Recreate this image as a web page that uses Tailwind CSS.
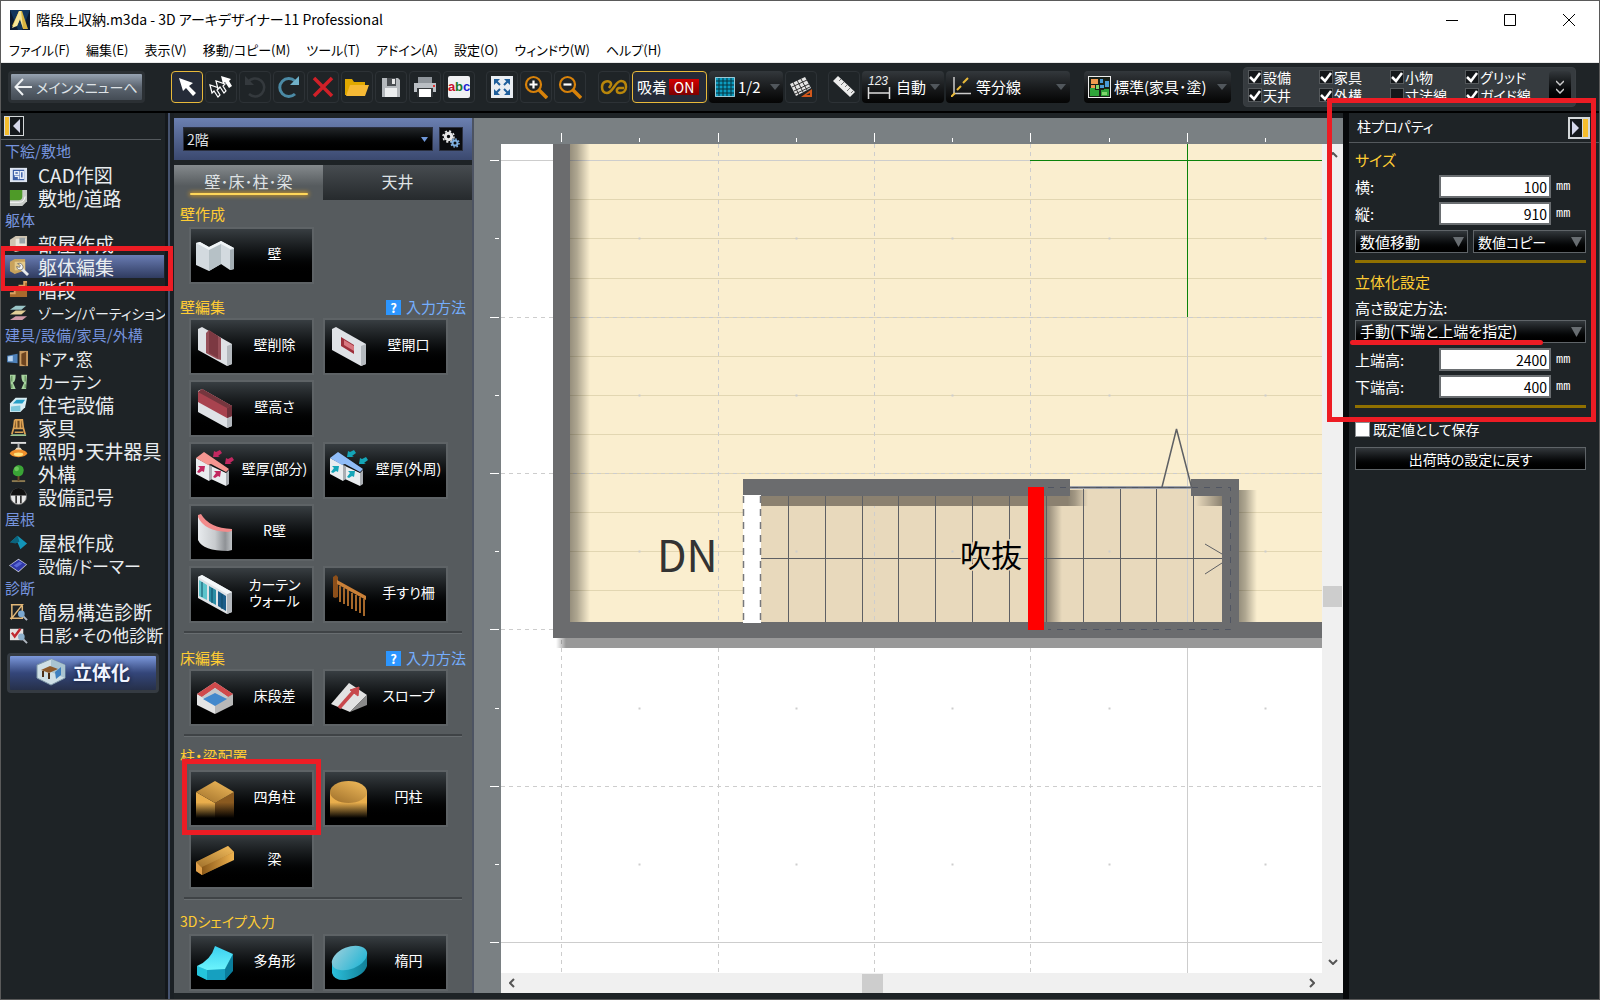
<!DOCTYPE html>
<html lang="ja">
<head>
  <meta charset="UTF-8" />
  <meta name="viewport" content="width=device-width, initial-scale=1.0" />
  <title>階段上収納.m3da - 3D アーキデザイナー11 Professional</title>
  <script src="https://cdn.jsdelivr.net/npm/@tailwindcss/browser@4"></script>
</head>
<body class="relative flex h-screen flex-col overflow-hidden border border-[#5a5a5a] bg-[#1e2326] font-['Noto_Sans_CJK_JP',sans-serif] text-[15px] text-white [font-feature-settings:'palt']">

  <!-- Title bar -->
  <header class="flex h-[37px] shrink-0 items-center bg-white pl-[9px] text-black">
    <svg class="h-5 w-5" viewBox="0 0 20 20">
      <rect width="20" height="20" fill="#0b1a30" />
      <path d="M0 0h20L12 20H8z" fill="#12365c" />
      <path d="M9 1h3l6 18h-5L10 9 7 16H2z" fill="#d9b440" />
      <path d="M9 1 2 18l5-2 3-7 3 9-2-17z" fill="#f6e69a" />
    </svg>
    <h1 class="ml-[6px] grow text-[14px]">階段上収納.m3da - 3D アーキデザイナー11 Professional</h1>
    <button class="grid h-full w-[58px] place-items-center" aria-label="最小化"><svg class="h-3 w-3" viewBox="0 0 12 12"><path d="M0 6.500h12" stroke="#000" /></svg></button>
    <button class="grid h-full w-[58px] place-items-center" aria-label="最大化"><svg class="h-3 w-3" viewBox="0 0 12 12" fill="none"><path d="M.5.500h11v11H.5z" stroke="#000" /></svg></button>
    <button class="grid h-full w-[60px] place-items-center" aria-label="閉じる"><svg class="h-3 w-3" viewBox="0 0 12 12"><path d="m0 0 12 12M12 0 0 12" stroke="#000" /></svg></button>
  </header>

  <nav class="flex h-[25px] shrink-0 items-center gap-4 border-b border-[#e8e8e8] bg-white pl-[8px] text-[13px] text-black">
    <button>ファイル(F)</button>
    <button>編集(E)</button>
    <button>表示(V)</button>
    <button>移動/コピー(M)</button>
    <button>ツール(T)</button>
    <button>アドイン(A)</button>
    <button>設定(O)</button>
    <button>ウィンドウ(W)</button>
    <button>ヘルプ(H)</button>
  </nav>

  <!-- Toolbar -->
  <div class="flex h-[50px] shrink-0 items-start border-b-2 border-black bg-[#1f2427] pt-2 pl-[7px]">
    <button class="flex h-8 w-[137px] items-center gap-1 rounded border-3 border-[#2b3034] bg-linear-to-b from-[#97a3b2] via-[#5c6570] to-[#444c55] pl-[3px] text-[14px] whitespace-nowrap text-[#dde2e6]">
      <svg class="h-5 w-[18px] shrink-0" viewBox="0 0 18 20" fill="none" stroke="#eef1f3" stroke-width="2"><path d="M18 10H2M9 2 1.500 10 9 18" /></svg>メインメニューへ
    </button>

    <div id="tools-edit" class="ml-[26px] flex gap-[2px]"></div>
    <div id="tools-zoom" class="ml-[11px] flex gap-[2px]"></div>

    <div class="ml-3 flex gap-[2px]">
      <button class="grid h-8 w-8 place-items-center rounded-sm border border-[#2d3236]" aria-label="連続">
        <svg class="h-4 w-7" viewBox="0 0 28 16" fill="none" stroke="#b8860b" stroke-width="2.500"><path d="M9 9c2-3 3-4 1-6C7 1 2 3 2 8c0 4 2 6 5 6 6 0 8-12 14-12 4 0 5 3 5 6 0 4-3 6-6 6-4 0-4-4-1-5h5" /></svg>
      </button>
      <button class="flex h-8 w-[75px] items-center gap-[2px] rounded-sm border border-[#e8b93a] bg-[#252b38] pl-1 text-[15px]">吸着<span class="h-4 w-[30px] bg-linear-to-b from-[#d40000] to-[#7d0000] text-center text-[14px] leading-4">ON</span></button>
      <div class="grid h-8 w-[74px] items-center rounded-sm bg-linear-to-b from-[#33383c] to-[#050505]">
        <svg class="col-start-1 row-start-1 ml-[6px] h-5 w-5" viewBox="0 0 20 20"><path d="M0 0h20v20H0z" fill="#0b9cc0" /><path d="M4 0v20M8 0v20M12 0v20M16 0v20M0 4h20M0 8h20M0 12h20M0 16h20" stroke="#06323f" /><path d="M.5.500h19v19H.5z" fill="none" stroke="#9cc8d4" /></svg>
        <select aria-label="グリッド分割" class="col-start-1 row-start-1 h-8 w-full appearance-none pl-[29px] text-[15px]"><option>1/2</option></select>
        <svg class="pointer-events-none col-start-1 row-start-1 mr-[3px] h-[6px] w-[10px] justify-self-end" viewBox="0 0 10 6"><path d="M0 0h10L5 6z" fill="#51575c" /></svg>
      </div>
      <button class="grid h-8 w-8 place-items-center rounded-sm border border-[#2d3236]" aria-label="グリッド角度">
        <svg class="h-6 w-6" viewBox="0 0 24 24"><path d="M1 9 16 2l6 11-15 8z" fill="#e4e4e4" /><path d="m4 7 6 13M8 5l6 12M12 4l6 11M3 12l15-7M5 16l15-7M6 19l15-7" stroke="#333" /><path d="M23 14v8H12z" fill="#d2581c" /><path d="M21 18v2h-4z" fill="#1f2427" /></svg>
      </button>
    </div>

    <div class="ml-[11px] flex gap-[2px]">
      <button class="grid h-8 w-8 place-items-center rounded-sm border border-[#2d3236]" aria-label="計測">
        <svg class="h-6 w-6" viewBox="0 0 24 24"><path d="M1 6 6 1l17 16-5 5z" fill="#ececec" /><path d="m9 4-2 2m5 1-3 3m6 0-2 2m5 1-3 3m6 0-2 2" stroke="#777" /></svg>
      </button>
      <div class="grid h-8 w-[82px] items-center rounded-sm bg-linear-to-b from-[#33383c] to-[#050505]">
        <svg class="col-start-1 row-start-1 ml-[5px] h-7 w-6" viewBox="0 0 24 28"><text x="1" y="12" font-size="12" font-style="italic" font-family="Liberation Sans" fill="#eee">123</text><path d="M1.500 14v12M22.500 14v12M1 20h22" stroke="#ddd" stroke-width="1.500" /></svg>
        <select aria-label="寸法線" class="col-start-1 row-start-1 h-8 w-full appearance-none pl-[34px] text-[15px]"><option>自動</option></select>
        <svg class="pointer-events-none col-start-1 row-start-1 mr-1 h-[6px] w-[10px] justify-self-end" viewBox="0 0 10 6"><path d="M0 0h10L5 6z" fill="#51575c" /></svg>
      </div>
      <div class="grid h-8 w-[124px] items-center rounded-sm bg-linear-to-b from-[#33383c] to-[#050505]">
        <svg class="col-start-1 row-start-1 ml-[5px] h-5 w-5" viewBox="0 0 20 20" fill="none"><path d="M3 0v16.500h17" stroke="#ccc" stroke-width="1.500" /><path d="m0 20 4-4m2-3 4-4m2-3 5-5" stroke="#e8b93a" stroke-width="2" /></svg>
        <select aria-label="補助線" class="col-start-1 row-start-1 h-8 w-full appearance-none pl-[30px] text-[15px]"><option>等分線</option></select>
        <svg class="pointer-events-none col-start-1 row-start-1 mr-1 h-[6px] w-[10px] justify-self-end" viewBox="0 0 10 6"><path d="M0 0h10L5 6z" fill="#51575c" /></svg>
      </div>
    </div>

    <div class="ml-[14px] grid h-8 w-[147px] items-center rounded-sm bg-linear-to-b from-[#33383c] to-[#050505]">
      <svg class="col-start-1 row-start-1 ml-1 h-[22px] w-[23px]" viewBox="0 0 23 22"><path d="M0 0h23v22H0z" fill="#eee" /><path d="M1 1h21v20H1z" fill="#182018" /><path d="M3 3h7v5H3zM3 9h4v3H3z" fill="#f09a50" /><path d="M12 3h3v4h-3zM17 5h4v6h-4zM12 9h4v3h-4z" fill="#4a9ad8" /><path d="M2 12h5v2h4v6H2zM13 14h3v-1h5v7h-8z" fill="#2fa53a" /><path d="M8 9h3v4H8zM14 16h5v3h-5z" fill="#7fd66b" /></svg>
      <select aria-label="表示設定" class="col-start-1 row-start-1 h-8 w-full appearance-none pl-[30px] text-[15px]"><option>標準(家具･塗)</option></select>
      <svg class="pointer-events-none col-start-1 row-start-1 mr-1 h-[6px] w-[10px] justify-self-end" viewBox="0 0 10 6"><path d="M0 0h10L5 6z" fill="#51575c" /></svg>
    </div>

    <div class="-mt-1 ml-3 flex h-10 w-[333px] items-start justify-between rounded border border-[#3a3f43] bg-[#363b3f] pr-1 pl-1">
      <div id="layers" class="grid grid-cols-[71px_71px_75px_75px] text-[14px] leading-[18px]"></div>
      <button class="mt-[3px] grid h-8 w-[22px] place-items-center rounded-sm bg-linear-to-b from-[#33383c] to-black" aria-label="展開">
        <svg class="h-[14px] w-2" viewBox="0 0 8 14" fill="none" stroke="#ccc" stroke-width="1.500"><path d="m0 1 4 4 4-4M0 9l4 4 4-4" /></svg>
      </button>
    </div>
  </div>

  <main class="flex min-h-0 grow">

    <!-- Left menu -->
    <aside class="flex w-[173px] shrink-0 border-r-4 border-[#1b2024]">
      <div class="w-[164px] shrink-0">
        <div class="mr-1 h-[27px] border-b border-[#54595d] pt-[3px] pl-[3px]">
          <button class="block" aria-label="メニューを隠す"><svg class="h-5 w-5" viewBox="0 0 20 20"><path d="M0 0h20v20H0z" fill="#d4d8da" /><path d="M6 1h13v18H6z" fill="#15191c" /><path d="M1 1h4v18H1z" fill="#f5bd2c" /><path d="M16 3v14l-7-7z" fill="#d5d8ea" /></svg></button>
        </div>
        <ul id="menu"></ul>
        <button class="mt-[7px] ml-[6px] flex h-10 w-[152px] items-center justify-center gap-[7px] rounded border-3 border-[#353b42] bg-linear-to-b from-[#7d99dc] via-[#34467a] to-[#26304a] pb-[2px] text-[19px] font-bold text-[#f0f4ff] [text-shadow:0_0_4px_#0a1430]">
          <svg class="h-7 w-[30px]" viewBox="0 0 30 28"><path d="M15 1 29 7v13l-14 7L1 20V7z" fill="#cfe0e6" stroke="#7f98a8" /><path d="M15 1 29 7v13L15 14z" fill="#a9c4d0" /><path d="m5 12 9-4 8 3-9 4z" fill="#8d5a2a" /><path d="M7 13v6m6-4v6m8-8v5" stroke="#4d3018" stroke-width="2" /><path d="m19 14 6-5v8l-5 4z" fill="#3d80c0" /></svg>立体化
        </button>
      </div>
      <div class="w-[5px] border-x-2 border-l-[#14181c] border-r-[#46536f] bg-[#14181c]"></div>
    </aside>

    <!-- Tool palette -->
    <section class="mt-[5px] mb-[6px] w-[300px] shrink-0 overflow-hidden border-r-2 border-[#4c5362] bg-[#565b5e]">
      <div class="flex h-[42px] items-center gap-[6px] bg-linear-to-b from-[#6b80b1] to-[#3b496f] pl-[9px]">
        <div class="grid w-[250px] items-center border border-[#2b3040] bg-linear-to-b from-[#222629] to-black">
          <select aria-label="階" class="col-start-1 row-start-1 h-[22px] appearance-none pl-[3px] text-[14px] leading-5 text-[#e0e4e8]"><option>2階</option></select>
          <svg class="pointer-events-none col-start-1 row-start-1 mr-1 h-[5px] w-[7px] justify-self-end" viewBox="0 0 7 5"><path d="M0 0h7L3.500 5z" fill="#6f97d8" /></svg>
        </div>
        <button class="grid h-6 w-6 place-items-center border border-[#2b3040] bg-[#0b0c0e]" aria-label="階の設定">
          <svg class="h-[18px] w-[18px]" viewBox="0 0 18 18" fill="none"><circle cx="6.500" cy="6.500" r="3.200" stroke="#e8e8e8" stroke-width="3" /><circle cx="6.500" cy="6.500" r="5.500" stroke="#e8e8e8" stroke-width="1.500" stroke-dasharray="2.200 2.100" /><circle cx="13" cy="13" r="2.500" stroke="#7fb0e0" stroke-width="2" /><circle cx="13" cy="13" r="4" stroke="#7fb0e0" stroke-width="1.500" stroke-dasharray="1.600 1.500" /></svg>
        </button>
      </div>
      <div class="grid h-10 grid-cols-2 border-t-5 border-[#1e2326] text-[16px] text-[#dfe2e4]">
        <button class="flex flex-col items-center bg-linear-to-b from-[#858a8d] to-[#565b5e] to-60% pt-[4px]">
          <span class="leading-6">壁･床･柱･梁</span>
          <span class="h-[2px] w-[118px] rounded bg-[#ffd75a] shadow-[0_0_4px_1px_#c8932a]"></span>
        </button>
        <button class="bg-linear-to-b from-[#474c50] to-[#262a2d] pb-1">天井</button>
      </div>
      <div id="palette"></div>
    </section>

    <!-- Drawing area -->
    <section class="mt-[5px] mb-[6px] grid min-w-0 grow grid-cols-[27px_minmax(0,1fr)_21px] grid-rows-[26px_minmax(0,1fr)_20px] bg-[#7a8083]">
      <svg id="ruler-x" class="col-span-2 col-start-2 h-full w-full" stroke="#fff"></svg>
      <svg id="ruler-y" class="col-start-1 row-start-2 h-full w-full" stroke="#fff"></svg>
      <svg id="plan" class="col-start-2 row-start-2 h-full w-full bg-white">
        <defs>
          <linearGradient id="shade"><stop offset="0" stop-opacity=".4" /><stop offset=".35" stop-opacity=".3" /><stop offset="1" stop-opacity="0" /></linearGradient>
          <linearGradient id="shadeIn"><stop offset="0" stop-opacity="0" /><stop offset="1" stop-opacity=".4" /></linearGradient>
        </defs>
        <g transform="translate(-501 -144)">
          <path d="M570 144h752v478H570z" fill="#faeecf" />
          <path d="M743 488h496v134H743z" fill="#e8d9bc" />
          <g id="boards" stroke="#e2d6b2" stroke-width="1"></g>
          <g id="grid" stroke="#cdcdcd"></g>
          <!-- shadows -->
          <path d="M570 144h20v478h-20z" fill="url(#shade)" />
          <path d="M566 638h756v10H566z" fill="#999" />
          <path d="M556 638h10v10h-10z" fill="url(#shadeIn)" />
          <path d="M760 496h308v10H760z" fill="#8b8170" />
          <path d="M1068 490h20v16h-20z" fill="url(#shade)" />
          <path d="M1044 506h18v116h-18z" fill="url(#shade)" />
          <path d="M1239 490h18v132h-18z" fill="url(#shade)" />
          <path d="M1196 496h26v10h-26z" fill="url(#shadeIn)" />
          <!-- stairs -->
          <g id="treads" stroke="#5e6064"></g>
          <path d="M761 558.500h461M1205 544l17 10M1205 574l17-11" stroke="#5e6064" fill="none" />
          <!-- walls -->
          <path d="M553 144h17v478h652V496h-31v-17h48v143h83v16H553zM743 479h327v17H743z" fill="#6b6c6e" />
          <path d="M743 495h18v128h-18z" fill="#fff" />
          <path d="M743.500 496v127M760.500 496v127" stroke="#77787c" stroke-width="1.500" stroke-dasharray="7 6" />
          <path d="M1070 487.500h121" stroke="#b9bcc6" stroke-width="3" />
          <path d="M1070 487.500h121M1162 487l14.500-58 15 58" stroke="#5e6064" stroke-width="1.500" fill="none" />
          <path d="M1048 487.500h182.500v142H1048" stroke="#505562" stroke-dasharray="6 6" fill="none" />
          <path d="M1030 160.500h292M1187.500 144v173" stroke="#0a820a" />
          <path d="M1028 487h16v143h-16z" fill="#f00" />
          <text x="657" y="572" font-size="43" fill="#333">DN</text>
          <text x="960" y="567" font-size="31" fill="#000" stroke="#e8d9bc" stroke-width="3" paint-order="stroke">吹抜</text>
        </g>
      </svg>
      <div class="row-start-2 flex flex-col items-center justify-between bg-[#f0f0f0] py-2">
        <svg class="h-[6px] w-[10px]" viewBox="0 0 10 6" fill="none" stroke="#555" stroke-width="2"><path d="m1 5 4-4 4 4" /></svg>
        <div class="mt-[76px] h-[21px] w-[19px] bg-[#cdcdcd]"></div>
        <svg class="h-[6px] w-[10px]" viewBox="0 0 10 6" fill="none" stroke="#555" stroke-width="2"><path d="m1 1 4 4 4-4" /></svg>
      </div>
      <div class="col-span-2 col-start-2 flex items-center bg-[#f0f0f0] pr-7 pl-2">
        <svg class="h-[10px] w-[6px]" viewBox="0 0 6 10" fill="none" stroke="#555" stroke-width="2"><path d="M5 1 1 5l4 4" /></svg>
        <div class="h-[19px] grow basis-0 pl-[43%]"><div class="h-full w-[21px] bg-[#cdcdcd]"></div></div>
        <svg class="h-[10px] w-[6px]" viewBox="0 0 6 10" fill="none" stroke="#555" stroke-width="2"><path d="m1 1 4 4-4 4" /></svg>
      </div>
    </section>

    <!-- Column properties -->
    <aside class="w-[256px] shrink-0 border-l-6 border-[#07090b]">
      <div class="flex h-[30px] items-center justify-between border-b border-[#54595d] pr-[9px] pl-2 text-[14px]">
        <h2 class="pb-[2px]">柱プロパティ</h2>
        <button aria-label="プロパティを隠す"><svg class="h-[22px] w-[22px]" viewBox="0 0 22 22"><path d="M0 0h22v22H0z" fill="#d4d8da" /><path d="M2 2h12v18H2z" fill="#15191c" /><path d="M15 2h5v18h-5z" fill="#f5bd2c" /><path d="M4 4v14l7-7z" fill="#d5d8ea" /></svg></button>
      </div>
      <form class="pr-[13px] pl-[6px] leading-[22px]">
        <h3 class="mt-[6px] text-[#ffcc33]">サイズ</h3>
        <div class="mt-[4px] grid grid-cols-[84px_112px_1fr] items-center gap-y-[4px]">
          <label for="width">横:</label>
          <input id="width" value="100" class="h-[23px] w-full border-2 border-[#6a6e71] bg-white pr-[2px] text-right text-[14px] text-black" />
          <span class="pl-[5px] font-['Liberation_Mono',monospace] text-[12px]">mm</span>
          <label for="depth">縦:</label>
          <input id="depth" value="910" class="h-[23px] w-full border-2 border-[#6a6e71] bg-white pr-[2px] text-right text-[14px] text-black" />
          <span class="pl-[5px] font-['Liberation_Mono',monospace] text-[12px]">mm</span>
        </div>
        <div class="mt-[5px] grid grid-cols-2 gap-[5px]">
          <div class="grid items-center border border-[#5f6468] bg-linear-to-b from-[#33383c] to-black">
            <select aria-label="数値移動" class="col-start-1 row-start-1 h-[21px] w-full appearance-none pl-1 leading-5"><option>数値移動</option></select>
            <svg class="pointer-events-none col-start-1 row-start-1 mr-[3px] h-[10px] w-[11px] justify-self-end" viewBox="0 0 11 10"><path d="M0 0h11L5.500 10z" fill="#686d71" /></svg>
          </div>
          <div class="grid items-center border border-[#5f6468] bg-linear-to-b from-[#33383c] to-black">
            <select aria-label="数値コピー" class="col-start-1 row-start-1 h-[21px] w-full appearance-none pl-1 text-[14px] leading-5"><option>数値コピー</option></select>
            <svg class="pointer-events-none col-start-1 row-start-1 mr-[3px] h-[10px] w-[11px] justify-self-end" viewBox="0 0 11 10"><path d="M0 0h11L5.500 10z" fill="#686d71" /></svg>
          </div>
        </div>
        <hr class="mt-[7px] border-t-3 border-[#907000]" />
        <h3 class="mt-2 text-[#ffcc33]">立体化設定</h3>
        <label for="method" class="mt-1 mb-[1px] block">高さ設定方法:</label>
        <div class="grid items-center border border-[#5f6468] bg-linear-to-b from-[#33383c] to-black">
          <select id="method" class="col-start-1 row-start-1 h-[21px] w-full appearance-none pb-[2px] pl-1 leading-[19px]"><option>手動(下端と上端を指定)</option></select>
          <svg class="pointer-events-none col-start-1 row-start-1 mr-[3px] h-[10px] w-[11px] justify-self-end" viewBox="0 0 11 10"><path d="M0 0h11L5.500 10z" fill="#686d71" /></svg>
        </div>
        <div class="mt-[5px] grid grid-cols-[84px_112px_1fr] items-center gap-y-[4px]">
          <label for="top">上端高:</label>
          <input id="top" value="2400" class="h-[23px] w-full border-2 border-[#6a6e71] bg-white pr-[2px] text-right text-[14px] text-black" />
          <span class="pl-[5px] font-['Liberation_Mono',monospace] text-[12px]">mm</span>
          <label for="bottom">下端高:</label>
          <input id="bottom" value="400" class="h-[23px] w-full border-2 border-[#6a6e71] bg-white pr-[2px] text-right text-[14px] text-black" />
          <span class="pl-[5px] font-['Liberation_Mono',monospace] text-[12px]">mm</span>
        </div>
        <hr class="mt-[7px] border-t-3 border-[#907000]" />
        <label class="mt-[10px] flex items-center gap-[3px] text-[14px]"><input type="checkbox" class="h-[15px] w-[15px] appearance-none border border-[#8a8e91] bg-white" />既定値として保存</label>
        <button type="button" class="mt-[7px] h-[23px] w-full border border-[#5f6468] bg-linear-to-b from-[#33383c] to-black text-[14px] leading-5">出荷時の設定に戻す</button>
      </form>
    </aside>
  </main>

  <!-- Red marks over the window -->
  <div class="pointer-events-none absolute top-[245px] -left-px h-[45px] w-[173px] border-5 border-[#ed1c24]"></div>
  <div class="pointer-events-none absolute top-[758px] left-[181px] h-[76px] w-[139px] border-5 border-[#ed1c24]"></div>
  <div class="pointer-events-none absolute top-[97px] right-[3px] h-[324px] w-[269px] border-5 border-[#ed1c24]"></div>
  <div class="pointer-events-none absolute top-[339px] right-[56px] h-[5px] w-[193px] rounded-full bg-[#ed1c24]"></div>

  <script>
    // ---- toolbar buttons: name, svg body (24x24) ----
    const editTools = [
      ["選択", `<path d="m4 3 4 13 3-3 7 8 3-3-7-7 4-3z" fill="#fff"/>`],
      ["複数選択", `<g fill="#1f2427" stroke="#fff" stroke-width="1.200"><path d="m1 10 2 8 2-2 4 6 2-2-3-5 2-2z"/><path d="m7 6 2 8 2-2 4 6 2-2-3-5 2-2z"/></g><path d="m12 1 2 8 2-2 4 6 3-2-3-5 2-2z" fill="#fff"/>`],
      ["元に戻す", `<path d="M6 19A9 9 0 1 0 5 7" fill="none" stroke="#34393d" stroke-width="2.500"/><path d="M2 1v9h9z" fill="#34393d"/>`],
      ["やり直し", `<path d="M18 19A9 9 0 1 1 18 6" fill="none" stroke="#4b8aa5" stroke-width="3"/><path d="M22 1v9h-9z" fill="#6fb0c8"/>`],
      ["削除", `<path d="m3 3 18 18M21 3 3 21" stroke="#d02028" stroke-width="3.500"/>`],
      ["開く", `<path d="M0 4h7l2 3h11v13H0z" fill="#e0a800"/><path d="M5 10h19l-4 11H1z" fill="#f6b935"/>`],
      ["保存", `<path d="M3 3h16l2 2v17H3z" fill="#b4b8bc"/><path d="M8 3h9v8H8z" fill="#4a4e52"/><path d="M13 4h3v5h-3z" fill="#e8e8e8"/><path d="M6 13h12v9H6z" fill="#eceeef"/>`],
      ["印刷", `<path d="M5 2h14v7H5z" fill="#8f959b"/><path d="M1 8h22v9H1z" fill="#b9bec3"/><path d="M4 13h16v9H4z" fill="#33373a"/><path d="M6 14h12v8H6z" fill="#fff"/><path d="M20 10h2v2h-2z" fill="#d33"/>`],
      ["文字", `<rect x="1" y="1" width="22" height="22" rx="2" fill="#f0f0f2"/><g font-family="Liberation Sans" font-weight="bold" font-size="13"><text x="1" y="16" fill="#c8102e">a</text><text x="8" y="16" fill="#1a7a2a">b</text><text x="16" y="16" fill="#2020d0">c</text></g>`]
    ];
    const zoomTools = [
      ["全体表示", `<path d="M1 1h22v22H1z" fill="#e9edf2"/><path d="M4 4h6L4 10zM20 4v6l-6-6zM4 20v-6l6 6zM20 20h-6l6-6z" fill="#1f5f9c"/><path d="m6 6 4 4m8-4-4 4M6 18l4-4m8 4-4-4" stroke="#1f5f9c" stroke-width="2"/>`],
      ["拡大", `<path d="m15 15 8 8" stroke="#d8820a" stroke-width="3.500"/><circle cx="9.500" cy="9.500" r="7.500" fill="#1f2427" stroke="#d8820a" stroke-width="2.200"/><path d="M5.500 9.500h8m-4-4v8" stroke="#fff" stroke-width="2.200"/>`],
      ["縮小", `<path d="m15 15 8 8" stroke="#d8820a" stroke-width="3.500"/><circle cx="9.500" cy="9.500" r="7.500" fill="#1f2427" stroke="#d8820a" stroke-width="2.200"/><path d="M5.500 9.500h8" stroke="#fff" stroke-width="2.200"/>`]
    ];
    const toolButton = ([name, svg], active) => `
      <button aria-label="${name}" class="grid h-8 w-8 place-items-center rounded-sm border ${active ? "border-[#e8b93a] bg-[#252b38]" : "border-[#2d3236]"}">
        <svg class="h-6 w-6" viewBox="0 0 24 24">${svg}</svg>
      </button>`;
    document.getElementById("tools-edit").innerHTML = editTools.map((t, i) => toolButton(t, i === 0)).join("");
    document.getElementById("tools-zoom").innerHTML = zoomTools.map(t => toolButton(t, false)).join("");

    // ---- layer check boxes ----
    const layers = ["設備", "家具", "小物", "グリッド", "天井", "外構", "寸法線", "ガイド線"];
    document.getElementById("layers").innerHTML = layers.map(name => `
      <label class="flex items-center gap-[1px] whitespace-nowrap">
        <span class="grid h-[14px] w-[14px]">
          <input type="checkbox" ${name === "寸法線" ? "" : "checked"} class="peer col-start-1 row-start-1 h-[14px] w-[14px] appearance-none border border-[#55595c] bg-[#14171a]" />
          <svg class="pointer-events-none col-start-1 row-start-1 hidden h-[14px] w-[14px] peer-checked:block" viewBox="0 0 14 14"><path d="m2 7 4 4 6-8" fill="none" stroke="#fff" stroke-width="2.500"/></svg>
        </span>${name}
      </label>`).join("");

    const menu = [
      ["下絵/敷地"],
      ["CAD作図", `<path d="M1 3h18v15H1z" fill="#dfe6f2"/><path d="M4 5h12v11H4z" fill="#3a5ea8"/><path d="M6 7h4v3H6zM12 7h3v7h-3zM6 12h4v3" fill="none" stroke="#e8eef8" stroke-width="1.500"/>`],
      ["敷地/道路", `<path d="M1 2h18v12l-5 5H1z" fill="#c8ccc8"/><path d="M1 2h13v7q0 4-4 4H1z" fill="#4e9a28"/><path d="M1 15h10q5 0 6-6" fill="none" stroke="#fff"/>`],
      ["躯体"],
      ["部屋作成", `<path d="m1 6 6-4h12v14l-12 3-6-3z" fill="#cfc4b0"/><path d="M7 5h11v12H7z" fill="#ece6da"/><path d="M11 4h6v6h-6z" fill="#9aa4a8"/>`],
      ["躯体編集", `<path d="m1 5 5-3h11v12L6 18l-5-3z" fill="#c8a25c"/><path d="M6 5h11v9H6z" fill="#e4c98a"/><path d="m13 12 7 7" stroke="#e8eaec" stroke-width="3"/><path d="M9 7a4 4 0 0 1 5 6q-5 2-6-3l3 1 1-2z" fill="#f2f4f6" stroke="#444" stroke-width=".6"/>`],
      ["階段", `<path d="M1 18v-4h5v-4h5V6h5V2h3v16z" fill="#a86a2c"/><path d="M1 14h5v-4h5V6h5V2h3" fill="none" stroke="#dca260" stroke-width="2"/>`],
      ["ゾーン/パーティション", `<path d="m1 7 6-4h11l-5 4z" fill="#9bc6c8"/><path d="m1 12 6-4h11l-5 4z" fill="#e2cf98"/><path d="m1 18 6-4h12l-5 4z" fill="#d09aa8"/>`, "text-[14px]"],
      ["建具/設備/家具/外構"],
      ["ドア・窓", `<path d="m-2 7 11-2v10l-11-1z" fill="#4d80b8"/><path d="m-1 8 5-1v6H-1z" fill="#b8d4f0"/><path d="M11 2h9v16h-9z" fill="#c89a60"/><path d="m13 5 5-2v15l-5-2z" fill="#6e4520"/>`, "text-[17px]"],
      ["カーテン", `<path d="M1 3h6q0 8-3 8 2 4 3 7H2zM19 3h-6q0 8 3 8-2 4-3 7h5z" fill="#a8d4a0"/><path d="M3 4v6m0 3v4M17 4v6m0 3v4" stroke="#4f8048"/>`, "text-[17px]"],
      ["住宅設備", `<path d="m1 9 6-6h12l-2 10-5 5H1z" fill="#d9eef4"/><path d="m4 9 4-4h9l-3 4z" fill="#28a0c8"/><path d="m2 12 10-1v6H2z" fill="#7cc8dc"/>`],
      ["家具", `<path d="M3 17h15v2H1z" fill="#9ac490"/><path d="M6 2h8v8H6z" fill="#6b4820"/><path d="M6 2h8l1 8 2 7M6 2 5 10l-2 7M5 11h10M8 3v7m4-7v7M6 15h9" fill="none" stroke="#dda254" stroke-width="1.800"/>`],
      ["照明・天井器具", `<path d="M2 1h16v2H2z" fill="#e0e0e0"/><path d="M9 3h2v5H9z" fill="#aaa"/><path d="m4 12 4-5h4l4 5z" fill="#f0e0c0"/><ellipse cx="10" cy="13" rx="9" ry="4" fill="#f0902c"/><ellipse cx="10" cy="14" rx="5" ry="2" fill="#ffe07a"/>`],
      ["外構", `<path d="M3 17h14v2H3z" fill="#8c7a50"/><path d="M9 10h2v8H9z" fill="#6d4a24"/><path d="M10 1q7 1 5 8-1 4-5 4-6 0-6-5 1-6 6-7z" fill="#3aa436"/><circle cx="8" cy="5" r="2.500" fill="#6cc75c"/>`],
      ["設備記号", `<circle cx="10" cy="10" r="8.500" fill="#e8e8e8" stroke="#666"/><path d="M2 9a8 8 0 0 1 16 0z" fill="#111"/><path d="M7.500 9v8m5-8v8" stroke="#111" stroke-width="1.500"/>`],
      ["屋根"],
      ["屋根作成", `<path d="m1 10 8-7 10 8-7 6-3-7-5-1z" fill="#1395b8"/><path d="m1 10 8-7 2 6-4 2z" fill="#0b647e"/>`],
      ["設備/ドーマー", `<path d="m0 10 10-7 9 6-9 8z" fill="#c8cce0"/><path d="m1 10 9-6 8 5-8 7z" fill="#3038a8"/><path d="m5 10 6-4 3 2-6 4z" fill="#5a68d8"/>`, "text-[17px]"],
      ["診断"],
      ["簡易構造診断", `<path d="M2 3h12L3 17V3m-2 14h13V4" fill="none" stroke="#e2b878" stroke-width="1.600"/><path d="m15 15 4 4" stroke="#b0b8c0" stroke-width="2"/><circle cx="13" cy="12.500" r="3.500" fill="#7ba8d0"/>`],
      ["日影・その他診断", `<path d="M1 4h14v12H1z" fill="#e4e0e0"/><path d="m3 8 3 4 6-8" fill="none" stroke="#c02830" stroke-width="2.500"/><path d="m15 15 4 4" stroke="#b0b8c0" stroke-width="2"/><circle cx="13" cy="12.500" r="3.500" fill="#8cb0cc"/>`, "text-[17px]"]
    ];
    document.getElementById("menu").innerHTML = menu.map(([name, svg, size]) => svg ? `
      <li><button class="flex h-[23px] w-[163px] items-center gap-[10px] pl-2 leading-[22px] whitespace-nowrap text-[#e9edf0] ${size || "text-[19px]"} ${name === "躯体編集" ? "bg-linear-to-b from-[#6a7db4] to-[#303c60]" : ""}">
        <svg class="h-[19px] w-[19px] shrink-0 overflow-visible" viewBox="0 0 20 20">${svg}</svg>${name}
      </button></li>` : `
      <li class="h-[23px] pl-1 leading-[22px] whitespace-nowrap text-[#7694de]">${name}</li>`).join("");

    // ---- palette: icons are drawn in a 44x48 box ----
    const slab = `<path d="M5 6 9 4l30 17v20l-5 2L5 27z" fill="#dfe2e6"/><path d="m34 23 5-2v20l-5 2z" fill="#b4b9be"/>`;
    const arrows = c => `<g fill="${c}"><path d="m4 25 3-4-2-2h7l-1 6-2-1-3 2zM20 30l3-4-2-2h7l-1 6-2-1-3 2zM29 6l-4 3 2 1h-7l1-6 2 1 4-2zM41 13l-4 3 2 1h-7l1-6 2 1 4-2z"/></g>`;
    const thick = (top, arrow) => `<path d="m3 11 13 7v16L3 27zM18 19l15 7v13l-15-7z" fill="#e9ecef"/><path d="m16 18 3 1v13l-3 2zM33 26l3-3v14l-3 2z" fill="#a9adb2"/><path d="m3 11 8-6 25 17-3 3-15-8-3 1z" fill="${top}"/>${arrows(arrow)}`;
    const icons = {
      wall: `<path d="m3 11 4-1 9 5 12-6 13 7v21l-4 1-9-6-12 7-13-6z" fill="#d3dadf"/><path d="m16 17 12-7v22l-12 7z" fill="#b6c1c6"/><path d="m3 11 4-1 9 5 12-6 13 7-4 1-9-5-12 6z" fill="#f1f5f7"/><path d="m37 18 4-1v20l-4 1z" fill="#a3adb3"/>`,
      del: slab + `<path d="m13 10 3-3 12 8v22l-4-1-11-6z" fill="#8e3f48" opacity=".9"/><path d="m16 8 9 5v22l-9-5z" fill="#6b2c34" opacity=".6"/>`,
      open: slab + `<path d="m14 14 13 8v9l-13-8z" fill="#9c2f3a"/><path d="m17 17 10 6v5l-10-6z" fill="#d87880"/>`,
      high: slab + `<path d="M5 7 9 4l30 17v10l-5 2L5 17z" fill="#a8434f"/><path d="m34 23 5-2v10l-5 2z" fill="#70303a"/><path d="m5 7 4-3 30 17-5 2z" fill="#75363e"/>`,
      thickA: thick("#f59590", "#c22860"),
      thickB: thick("#8fbcf8", "#14a5b8"),
      round: `<path d="M5 7q10 15 30 15l4-2v21l-4 1Q10 42 5 31z" fill="url(#metal)"/><path d="m5 6 3-1q8 14 31 15v2l-4 1Q11 22 5 8z" fill="#f28b8b"/>`,
      curtain: slab + `<path d="m6 9 8 5v15l-8-4z" fill="#5cc4cc"/><path d="m16 15 7 4v15l-7-4z" fill="#2a8da5"/><path d="m25 20 8 5v15l-8-5z" fill="#1b5d8a"/><path d="M9 11v15m10-9v15m10-9v15" stroke="#0e4d68" stroke-width="2" opacity=".5"/><path d="m5 6 4-2 30 17-5 2z" fill="#f4f8fa"/>`,
      fence: `<path d="M13 15v16m4-14v16m4-14v16m4-13v16m4-14v16m4-14v16m4-14v17" stroke="#a5672a" stroke-width="2"/><path d="M6 8V6l3-2 2 2v20l-3 1-2-1z" fill="#8c4f1a"/><path d="m10 9 29 16v4L10 13z" fill="#c98038"/>`,
      step: `<path d="m4 20 18 10v10L4 31z" fill="#e4e4e4"/><path d="m40 20-18 10v10l18-9z" fill="#b8b8b8"/><path d="M4 20 22 8l18 12-18 11z" fill="#d8d8d8"/><path d="M4 20 22 8l18 12-5 3-13-9-13 9z" fill="#d04a4c"/><path d="m22 14 13 9-13 8-13-8z" fill="#c4c8cc"/><path d="m22 19 12 6-12 7-12-7z" fill="#4288cc"/>`,
      slope: `<path d="m4 30 18-21 18 12-17 17z" fill="#e2e2e2"/><path d="M40 21v10l-17 7z" fill="#8a8a8a"/><path d="m12 34 15-17" stroke="#c8484c" stroke-width="3.500"/><path d="m32 13-1 9-8-6z" fill="#c8484c" stroke="#c8484c"/>`,
      cube: `<path d="m3 17 19 11v15H3z" fill="url(#goldFade)"/><path d="M41 17 22 28v15h19z" fill="url(#brownFade)"/><path d="M22 6 41 17 22 28 3 17z" fill="url(#goldTop)"/>`,
      cyl: `<path d="M3 17v26h37V17z" fill="url(#goldFade)"/><ellipse cx="21.500" cy="17" rx="18.500" ry="11" fill="url(#goldTop)"/>`,
      beam: `<path d="m3 25 32-16 6 6v7L9 38l-6-4z" fill="#a8722a"/><path d="m3 25 32-16 6 6L9 31z" fill="url(#goldTop)"/><path d="m9 30 32-15v8L9 38z" fill="url(#beamSide)"/><path d="m3 25 6 6v7l-6-4z" fill="#e0a04a"/>`,
      poly: `<path d="M4 27v9l10 5h18l8-10V15L32 30z" fill="#16a0c0"/><path d="m32 30 8-15v17l-8 9z" fill="#0a7d9c"/><path d="m4 27 10 4v10L4 36z" fill="#24c4dc"/><path d="M4 27q14-6 18-20l18 8-8 15-18 1z" fill="url(#cyan)"/>`,
      oval: `<path d="M5 22v12q2 8 14 7 18-4 21-14V15z" fill="url(#cyanSide)"/><ellipse cx="22.500" cy="19" rx="18.500" ry="11" transform="rotate(-22 22.500 19)" fill="url(#cyanTop)"/>`
    };
    const palette = [
      { title: "壁作成", top: "pt-[3px]", gap: "mb-[2px]", tools: [["壁", "wall"]] },
      { title: "壁編集", help: true, top: "pt-[12px]", gap: "", tools: [["壁削除", "del"], ["壁開口", "open"], ["壁高さ", "high"], null, ["壁厚(部分)", "thickA"], ["壁厚(外周)", "thickB"], ["R壁", "round"], null, ["カーテン<br>ウォール", "curtain"], ["手すり柵", "fence"]] },
      { title: "床編集", help: true, line: true, top: "pt-[13px]", gap: "", tools: [["床段差", "step"], ["スロープ", "slope"]] },
      { title: "柱・梁配置", line: true, top: "pt-[8px]", gap: "mb-[3px]", tools: [["四角柱", "cube"], ["円柱", "cyl"], ["梁", "beam"]] },
      { title: "3Dシェイプ入力", line: true, top: "pt-[10px]", gap: "mb-[2px]", tools: [["多角形", "poly"], ["楕円", "oval"]] }
    ];
    document.getElementById("palette").innerHTML = `
      <svg class="absolute h-0 w-0"><defs>
        <linearGradient id="metal"><stop stop-color="#e8ebee"/><stop offset=".5" stop-color="#c8cbce"/><stop offset=".8" stop-color="#8f9296"/><stop offset="1" stop-color="#c0c3c6"/></linearGradient>
        <linearGradient id="goldFade" x2="0" y2="1"><stop offset=".4" stop-color="#e9ae4c"/><stop offset="1" stop-color="#e9ae4c" stop-opacity="0"/></linearGradient>
        <linearGradient id="brownFade" x2="0" y2="1"><stop offset=".4" stop-color="#8a5a20"/><stop offset="1" stop-color="#8a5a20" stop-opacity="0"/></linearGradient>
        <linearGradient id="goldTop" x1="1" y1="0" x2="0.300" y2="1"><stop stop-color="#f4bd5c"/><stop offset="1" stop-color="#a87830"/></linearGradient>
        <linearGradient id="beamSide"><stop stop-color="#8a5818"/><stop offset="1" stop-color="#f0b450"/></linearGradient>
        <linearGradient id="cyan" x2="0" y2="1"><stop stop-color="#3ad0f0"/><stop offset="1" stop-color="#6cf4fc"/></linearGradient>
        <linearGradient id="cyanTop" x2="1" y2="1"><stop stop-color="#9ccfdc"/><stop offset="1" stop-color="#1cb4d4"/></linearGradient>
        <linearGradient id="cyanSide"><stop stop-color="#2cc0dc"/><stop offset="1" stop-color="#128098"/></linearGradient>
      </defs></svg>` + palette.map(s => `
      ${s.line ? `<hr class="mt-2 mr-[10px] ml-[10px] border-t-2 border-b border-t-[#3f4346] border-b-[#686d70]" />` : ""}
      <div class="${s.top}">
        <div class="flex h-[22px] items-center justify-between pr-[6px] pl-[6px] leading-[22px] ${s.gap}">
          <h3 class="text-[#ffcc33] ${s.title === "3Dシェイプ入力" ? "text-[14px]" : ""}">${s.title}</h3>
          ${s.help ? `<a href="#" class="flex items-center gap-[5px] text-[#74adfc]"><span class="h-[15px] w-[15px] bg-[#2c96ff] text-center text-[13px] leading-[15px] font-bold text-white">?</span>入力方法</a>` : ""}
        </div>
        <div class="ml-[15px] grid grid-cols-[125px_125px] gap-x-[9px] gap-y-[5px]">
          ${s.tools.map(t => t ? `
          <button class="flex h-[57px] items-center border-2 border-[#5e6366] bg-linear-to-b from-[#383e42] to-black to-90% pl-[2px]">
            <svg class="h-12 w-11 shrink-0" viewBox="0 0 44 48">${icons[t[1]]}</svg>
            <span class="grow pb-[6px] text-center text-[14px] leading-4 whitespace-nowrap">${t[0]}</span>
          </button>` : `<span></span>`).join("")}
        </div>
      </div>`).join("");

    // ---- rulers and grid ----
    const xs = [561.5, 718.5, 874.5, 1030.5, 1187.5];
    const xm = [639.5, 796.5, 952.5, 1109.5, 1265.5];
    const ys = [160.5, 317.5, 473.5, 629.5, 786.5, 942.5];
    const ym = [238.5, 395.5, 551.5, 708.5, 864.5];
    const paths = list => list.map(d => `<path d="${d}"/>`).join("");
    document.getElementById("ruler-x").innerHTML = paths([...xs.map(x => `M${x - 501} 15v9`), ...xm.map(x => `M${x - 501} 20v4`)]);
    document.getElementById("ruler-y").innerHTML = paths([...ys.map(y => `M16 ${y - 144}h9`), ...ym.map(y => `M21 ${y - 144}h4`)]);
    document.getElementById("grid").innerHTML =
      xs.map(x => `<path d="M${x} 144V973" ${x === 1187.5 ? "" : `stroke-dasharray="4 4"`}/>`).join("") +
      ys.map(y => `<path d="M501 ${y}H1322" ${y === 160.5 || y === 942.5 ? "" : `stroke-dasharray="4 4"`}/>`).join("") +
      xm.map(x => ym.map(y => `<path d="M${x - 1} ${y}h2" stroke-width="2"/>`).join("")).join("");
    document.getElementById("boards").innerHTML = paths([199.5, 238.5, 278.5, 317.5, 356.5, 395.5, 434.5, 473.5].map(y => `M570 ${y}h752`)
      .concat([512.5, 551.5, 590.5].map(y => `M570 ${y}h173M1239 ${y}h83`)));
    document.getElementById("treads").innerHTML = paths([788.5, 825.5, 862.5, 898.5, 935.5, 972.5, 1009.5].map(x => `M${x} 496v126`)
      .concat([1046.5, 1083.5, 1120.5, 1156.5, 1193.5].map(x => `M${x} 488v134`)));
  </script>
</body>
</html>
